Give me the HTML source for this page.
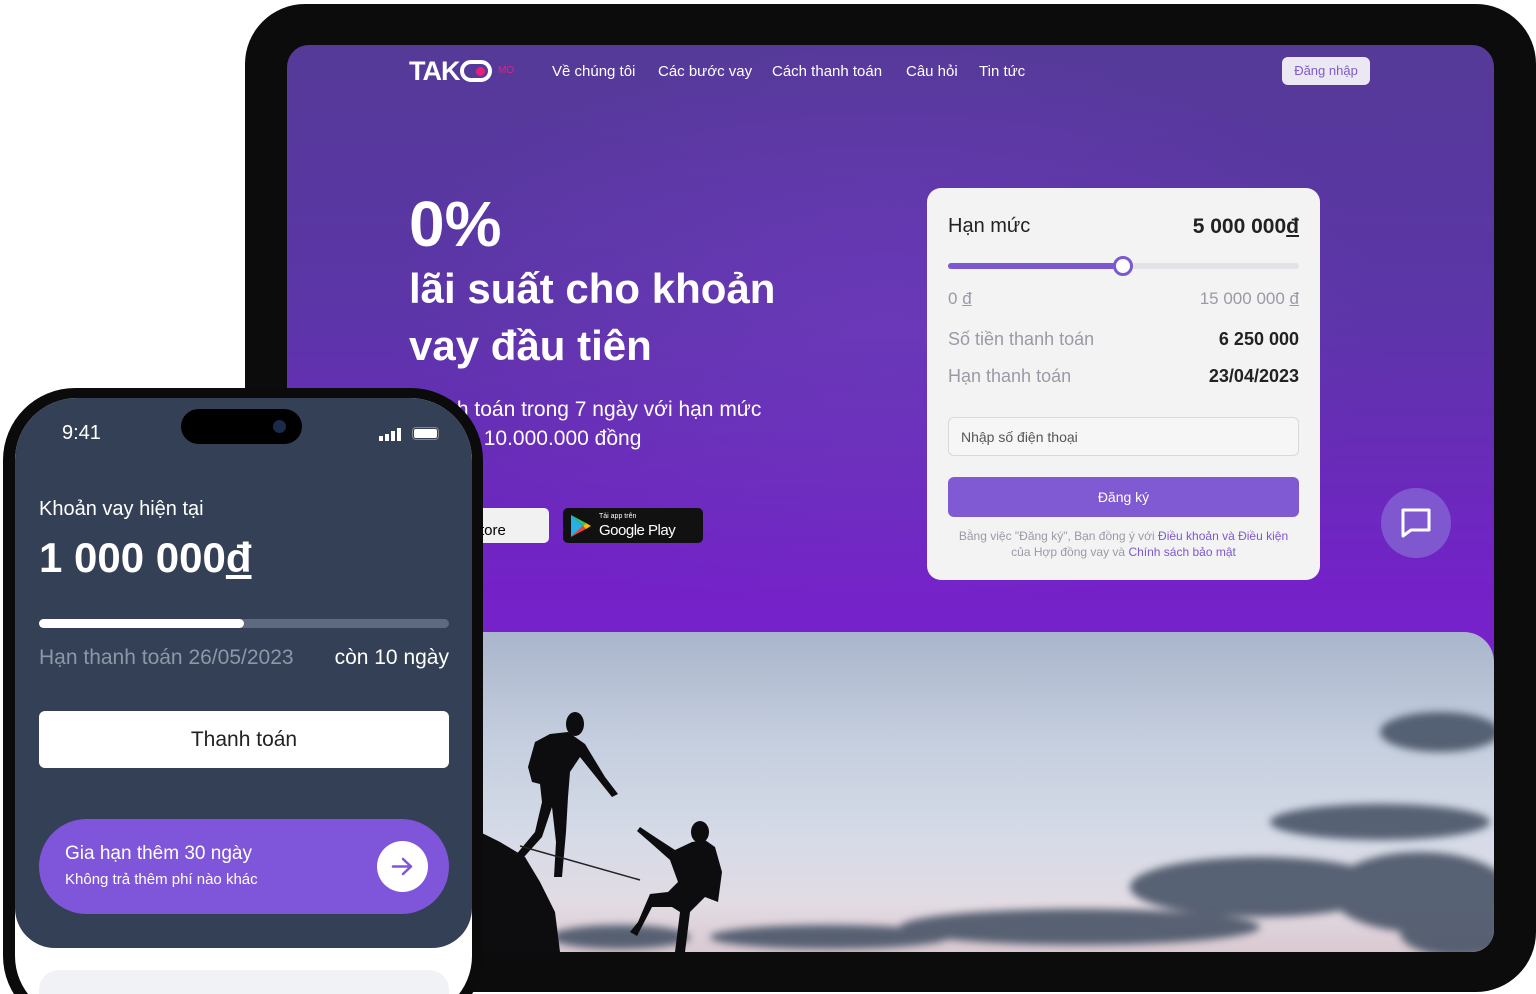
<!DOCTYPE html>
<html><head><meta charset="utf-8"><style>
*{margin:0;padding:0;box-sizing:border-box}
html,body{width:1536px;height:994px;overflow:hidden}
body{background:#fff;position:relative;font-family:"Liberation Sans","DejaVu Sans",sans-serif}
.abs{position:absolute}
#tab{left:245px;top:4px;width:1291px;height:988px;background:#0c0c0d;border-radius:60px}
#scr{left:287px;top:45px;width:1207px;height:907px;border-radius:22px;overflow:hidden;
background:radial-gradient(ellipse 500px 300px at 600px 280px,rgba(120,60,200,.5),transparent),linear-gradient(180deg,#553a98 0%,#5c35a8 30%,#7422c8 60%,#8a1de0 100%)}
.nav{color:#fff;font-size:15px;top:63px}
.w{color:#fff}
#card{left:927px;top:188px;width:393px;height:392px;background:#f3f3f4;border-radius:14px}
.g{color:#9a9aa6}
</style></head><body>
<div id="tab" class="abs"></div>
<div id="scr" class="abs">
 <div class="abs" style="left:193px;top:587px;width:1014px;height:320px;border-top-right-radius:30px;overflow:hidden;background:linear-gradient(180deg,#a9b5cb 0%,#c5cfdf 35%,#d6dbe7 65%,#e2dbe3 85%,#dac9d1 100%)">
  <svg width="1014" height="320" viewBox="0 0 1014 320">
   <defs><filter id="b"><feGaussianBlur stdDeviation="4"/></filter></defs>
   <g fill="#4a5468" filter="url(#b)" opacity=".9">
    <ellipse cx="960" cy="100" rx="60" ry="20"/>
    <ellipse cx="900" cy="190" rx="110" ry="18"/>
    <ellipse cx="780" cy="255" rx="130" ry="30"/>
    <ellipse cx="940" cy="260" rx="90" ry="40"/>
    <ellipse cx="600" cy="295" rx="180" ry="18"/>
    <ellipse cx="350" cy="305" rx="120" ry="12"/>
    <ellipse cx="140" cy="305" rx="70" ry="12"/>
    <ellipse cx="980" cy="300" rx="60" ry="25"/>
   </g>
   <g fill="#0d0d10">
    <path d="M0 200 L20 210 L45 225 L60 250 L75 280 L80 320 L0 320Z"/>
    <!-- woman -->
    <ellipse cx="95" cy="92" rx="9" ry="12"/>
    <path d="M88 100 L70 102 L55 110 L48 135 L52 150 L60 152 L62 170 L55 200 L30 230 L35 235 L62 205 L72 175 L76 210 L74 245 L82 245 L86 200 L88 165 L90 140 L100 125 L120 150 L132 165 L138 162 L125 145 L105 112Z"/>
    <!-- man -->
    <ellipse cx="220" cy="200" rx="9" ry="11"/>
    <path d="M212 210 L195 218 L175 205 L160 195 L157 199 L172 212 L190 228 L198 250 L188 260 L170 262 L158 290 L150 300 L157 304 L172 275 L192 275 L200 280 L195 320 L205 320 L210 280 L225 265 L238 270 L242 240 L235 215 L225 208Z"/>
   </g>
   <path d="M40 214 L160 248" stroke="#222" stroke-width="1.5"/>
  </svg>
 </div>
</div>
<!-- nav -->
<div class="abs w" style="left:409px;top:56px;font-size:27px;font-weight:bold;letter-spacing:-1px">TAK<span style="display:inline-block;width:32px;height:22px;border:4px solid #fff;border-radius:12px;vertical-align:-2px;position:relative"><span style="position:absolute;right:3px;top:3px;width:9px;height:9px;border-radius:50%;background:#e8207a"></span></span></div>
<div class="abs" style="left:498px;top:65px;font-size:10px;color:#e8207a">MO</div>
<div class="abs nav" style="left:552px">Về chúng tôi</div>
<div class="abs nav" style="left:658px">Các bước vay</div>
<div class="abs nav" style="left:772px">Cách thanh toán</div>
<div class="abs nav" style="left:906px">Câu hỏi</div>
<div class="abs nav" style="left:979px">Tin tức</div>
<div class="abs" style="left:1282px;top:57px;width:88px;height:28px;background:#ece8f3;border-radius:6px;color:#7b5cc8;font-size:13px;text-align:center;line-height:28px">Đăng nhập</div>
<!-- hero -->
<div class="abs w" style="left:409px;top:187px;font-size:64px;font-weight:bold">0%</div>
<div class="abs w" style="left:409px;top:260px;font-size:42px;font-weight:bold;line-height:57px">lãi suất cho khoản<br>vay đầu tiên</div>
<div class="abs w" style="left:409px;top:395px;font-size:21px;line-height:29px">Thanh toán trong 7 ngày với hạn mức<br>lên đến 10.000.000 đồng</div>
<div class="abs" style="left:440px;top:508px;width:109px;height:35px;background:#f1f1f2;border-radius:5px;font-size:15px;padding:14px 0 0 40px">tore</div>
<div class="abs" style="left:563px;top:508px;width:140px;height:35px;background:#111;border-radius:5px;color:#fff">
 <svg class="abs" style="left:8px;top:7px" width="20" height="22" viewBox="0 0 20 22"><path d="M0 0 L12 11 L0 22Z" fill="#27b0e8"/><path d="M0 0 L15 8 L12 11Z" fill="#32c26a"/><path d="M0 22 L15 14 L12 11Z" fill="#ea4335"/><path d="M15 8 L20 11 L15 14 L12 11Z" fill="#fbbc04"/></svg>
 <div class="abs" style="left:36px;top:5px;font-size:7px">Tải app trên</div>
 <div class="abs" style="left:36px;top:14px;font-size:15px;letter-spacing:-.5px">Google Play</div>
</div>
<!-- card -->
<div id="card" class="abs">
 <div class="abs" style="left:21px;top:27px;font-size:20px;color:#222">Hạn mức</div>
 <div class="abs" style="right:21px;top:27px;font-size:21px;font-weight:bold;color:#222">5 000 000<u>đ</u></div>
 <div class="abs" style="left:21px;top:75px;width:351px;height:6px;border-radius:3px;background:#e2e2e8"></div>
 <div class="abs" style="left:21px;top:75px;width:175px;height:6px;border-radius:3px;background:#7b58cf"></div>
 <div class="abs" style="left:186px;top:68px;width:20px;height:20px;border-radius:50%;background:#fff;border:3px solid #7b58cf"></div>
 <div class="abs g" style="left:21px;top:101px;font-size:17px">0 <u>đ</u></div>
 <div class="abs g" style="right:21px;top:101px;font-size:17px">15 000 000 <u>đ</u></div>
 <div class="abs g" style="left:21px;top:141px;font-size:18px">Số tiền thanh toán</div>
 <div class="abs" style="right:21px;top:141px;font-size:18px;font-weight:bold;color:#222">6 250 000</div>
 <div class="abs g" style="left:21px;top:178px;font-size:18px">Hạn thanh toán</div>
 <div class="abs" style="right:21px;top:178px;font-size:18px;font-weight:bold;color:#222">23/04/2023</div>
 <div class="abs" style="left:21px;top:229px;width:351px;height:39px;border:1px solid #d8d8de;border-radius:6px;background:#f6f6f7;font-size:14px;color:#555;padding:11px 0 0 12px">Nhập số điện thoại</div>
 <div class="abs" style="left:21px;top:289px;width:351px;height:40px;border-radius:6px;background:#7f5ad2;color:#fff;font-size:14px;text-align:center;line-height:40px">Đăng ký</div>
 <div class="abs g" style="left:0;top:340px;width:393px;text-align:center;font-size:12px;line-height:16px">Bằng việc "Đăng ký", Bạn đồng ý với <span style="color:#7b58cf">Điều khoản và Điều kiện</span><br>của Hợp đồng vay và <span style="color:#7b58cf">Chính sách bảo mật</span></div>
</div>
<div class="abs" style="left:1381px;top:488px;width:70px;height:70px;border-radius:50%;background:#7f57cf">
 <svg class="abs" style="left:19px;top:19px" width="32" height="32" viewBox="0 0 32 32"><path d="M3 3h26v20H11l-8 6z" fill="none" stroke="#fff" stroke-width="3" stroke-linejoin="round"/></svg>
</div>
<!-- phone -->
<div class="abs" style="left:3px;top:388px;width:480px;height:640px;background:#0b0b0c;border-radius:72px"></div>
<div class="abs" style="left:15px;top:398px;width:457px;height:620px;background:#fff;border-radius:62px;overflow:hidden">
 <div class="abs" style="left:0;top:0;width:457px;height:550px;background:#344055;border-radius:0 0 40px 40px"></div>
 <div class="abs" style="left:24px;top:572px;width:410px;height:60px;background:#f1f2f5;border-radius:20px"></div>
</div>
<div class="abs" style="left:181px;top:409px;width:121px;height:35px;background:#000;border-radius:18px"></div>
<div class="abs" style="left:273px;top:420px;width:13px;height:13px;border-radius:50%;background:#1a2a4a"></div>
<div class="abs w" style="left:62px;top:422px;font-size:20px">9:41</div>
<svg class="abs" style="left:379px;top:427px" width="24" height="14"><rect x="0" y="9" width="4" height="5" fill="#fff"/><rect x="6" y="7" width="4" height="7" fill="#fff"/><rect x="12" y="4" width="4" height="10" fill="#fff"/><rect x="18" y="1" width="4" height="13" fill="#fff"/></svg>
<div class="abs" style="left:412px;top:427px;width:27px;height:13px;border:1.5px solid #888;border-radius:4px;padding:1px"><div style="background:#fff;width:100%;height:100%;border-radius:2px"></div></div>
<div class="abs w" style="left:39px;top:498px;font-size:20px">Khoản vay hiện tại</div>
<div class="abs w" style="left:39px;top:534px;font-size:42px;font-weight:bold">1 000 000<u>đ</u></div>
<div class="abs" style="left:39px;top:619px;width:410px;height:9px;border-radius:5px;background:#5f6a80"></div>
<div class="abs" style="left:39px;top:619px;width:205px;height:9px;border-radius:5px;background:#fff"></div>
<div class="abs" style="left:39px;top:646px;font-size:21px;color:#8e97a8">Hạn thanh toán 26/05/2023</div>
<div class="abs w" style="right:1087px;top:646px;font-size:21px">còn 10 ngày</div>
<div class="abs" style="left:39px;top:711px;width:410px;height:57px;border-radius:6px;background:#fff;font-size:21px;color:#222;text-align:center;line-height:57px">Thanh toán</div>
<div class="abs" style="left:39px;top:819px;width:410px;height:95px;border-radius:48px;background:#7f56d9">
 <div class="abs w" style="left:26px;top:24px;font-size:19px">Gia hạn thêm 30 ngày</div>
 <div class="abs w" style="left:26px;top:52px;font-size:15px">Không trả thêm phí nào khác</div>
 <div class="abs" style="left:338px;top:22px;width:51px;height:51px;border-radius:50%;background:#fff">
  <svg class="abs" style="left:13px;top:13px" width="25" height="25" viewBox="0 0 25 25"><path d="M3 12.5h18M13 5l8 7.5-8 7.5" fill="none" stroke="#7f56d9" stroke-width="2.5" stroke-linecap="round" stroke-linejoin="round"/></svg>
 </div>
</div>
</body></html>
